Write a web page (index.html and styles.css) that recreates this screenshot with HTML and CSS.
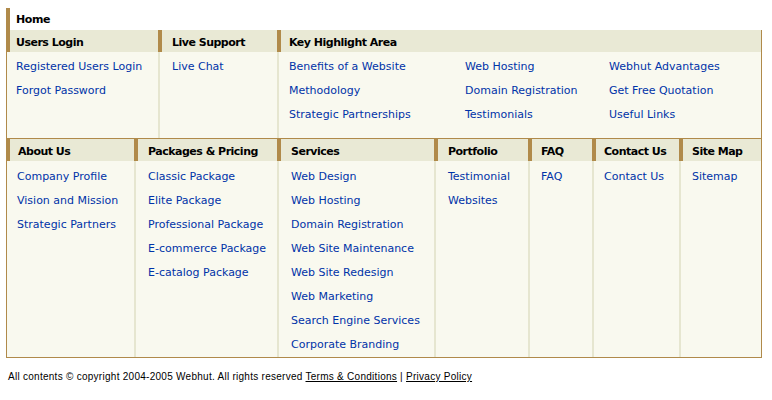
FILE: index.html
```html
<!DOCTYPE html>
<html>
<head>
<meta charset="utf-8">
<link rel="stylesheet" href="styles.css">
</head>
<body>
<div class="page">
  <div class="home">Home</div>
  <div class="box">
    <div class="row row-top">
      <div class="col w-users">
        <div class="head first pad-6">Users Login</div>
        <div class="body first pad-6">
          <a href="#">Registered Users Login</a>
          <a href="#">Forgot Password</a>
        </div>
      </div>
      <div class="col w-live">
        <div class="head">Live Support</div>
        <div class="body"><a href="#">Live Chat</a></div>
      </div>
      <div class="col w-key">
        <div class="head pad-8">Key Highlight Area</div>
        <div class="body pad-8 key-grid">
          <a href="#">Benefits of a Website</a>
          <a href="#">Web Hosting</a>
          <a href="#">Webhut Advantages</a>
          <a href="#">Methodology</a>
          <a href="#">Domain Registration</a>
          <a href="#">Get Free Quotation</a>
          <a href="#">Strategic Partnerships</a>
          <a href="#">Testimonials</a>
          <a href="#">Useful Links</a>
        </div>
      </div>
    </div>
    <div class="row row-bottom">
      <div class="col w-about">
        <div class="head first pad-7">About Us</div>
        <div class="body first pad-7">
          <a href="#">Company Profile</a>
          <a href="#">Vision and Mission</a>
          <a href="#">Strategic Partners</a>
        </div>
      </div>
      <div class="col w-pack">
        <div class="head">Packages &amp; Pricing</div>
        <div class="body">
          <a href="#">Classic Package</a>
          <a href="#">Elite Package</a>
          <a href="#">Professional Package</a>
          <a href="#">E-commerce Package</a>
          <a href="#">E-catalog Package</a>
        </div>
      </div>
      <div class="col w-serv">
        <div class="head">Services</div>
        <div class="body">
          <a href="#">Web Design</a>
          <a href="#">Web Hosting</a>
          <a href="#">Domain Registration</a>
          <a href="#">Web Site Maintenance</a>
          <a href="#">Web Site Redesign</a>
          <a href="#">Web Marketing</a>
          <a href="#">Search Engine Services</a>
          <a href="#">Corporate Branding</a>
        </div>
      </div>
      <div class="col w-port">
        <div class="head">Portfolio</div>
        <div class="body">
          <a href="#">Testimonial</a>
          <a href="#">Websites</a>
        </div>
      </div>
      <div class="col w-faq">
        <div class="head pad-9">FAQ</div>
        <div class="body pad-9"><a href="#">FAQ</a></div>
      </div>
      <div class="col w-contact">
        <div class="head pad-8">Contact Us</div>
        <div class="body pad-8"><a href="#">Contact Us</a></div>
      </div>
      <div class="col w-site">
        <div class="head pad-9">Site Map</div>
        <div class="body pad-9"><a href="#">Sitemap</a></div>
      </div>
    </div>
  </div>
  <div class="footer">All contents &copy; copyright 2004-2005 Webhut. All rights reserved <a href="#">Terms &amp; Conditions</a> | <a href="#">Privacy Policy</a></div>
</div>
</body>
</html>
```
FILE: styles.css
```css
html, body {
  margin: 0;
  padding: 0;
  background: #ffffff;
}

.page {
  padding: 8px 0 0 6px;
  width: 756px;
  font-family: "DejaVu Sans", Verdana, sans-serif;
  font-size: 11px;
}

.home {
  box-sizing: border-box;
  height: 22px;
  padding-top: 1px;
  line-height: 21px;
  border-left: 4px solid #b08a4a;
  padding-left: 6px;
  font-weight: bold;
  letter-spacing: -0.4px;
  color: #000;
}

.box {
  border-right: 1px solid #b08a4a;
  border-bottom: 1px solid #b08a4a;
}

.row {
  display: flex;
}

.row-top {
  border-bottom: 1px solid #b08a4a;
}

.col {
  display: flex;
  flex-direction: column;
  flex: none;
  box-sizing: border-box;
}

.head {
  box-sizing: border-box;
  height: 22px;
  padding-top: 3px;
  line-height: 19px;
  background: #e9e9d5;
  border-left: 4px solid #b08a4a;
  padding-left: 10px;
  font-weight: bold;
  letter-spacing: -0.5px;
  color: #000;
  white-space: nowrap;
}

.row-bottom .head {
  padding-top: 4px;
  line-height: 18px;
}

.body {
  flex: 1;
  background: #f9f9ef;
  border-left: 2px solid #e6e6d0;
  padding: 3px 0 1px 12px;
}

.row-top .body {
  min-height: 82px;
}

.row-bottom .body {
  padding-top: 4px;
  padding-bottom: 0;
}

.body.first {
  border-left: 1px solid #b08a4a;
}

.body a {
  display: block;
  height: 24px;
  line-height: 24px;
  color: #0033a8;
  text-decoration: none;
  white-space: nowrap;
}

.key-grid {
  display: grid;
  grid-template-columns: 176px 144px auto;
  align-content: start;
}

.head.pad-6 { padding-left: 6px; }
.body.pad-6 { padding-left: 9px; }
.head.pad-7 { padding-left: 8px; }
.body.pad-7 { padding-left: 10px; }
.head.pad-8 { padding-left: 8px; }
.body.pad-8 { padding-left: 10px; }
.head.pad-9 { padding-left: 9px; }
.body.pad-9 { padding-left: 11px; }

.w-users { width: 152px; }
.w-live { width: 119px; }
.w-key { width: 484px; }

.w-about { width: 128px; }
.w-pack { width: 143px; }
.w-serv { width: 157px; }
.w-port { width: 94px; }
.w-faq { width: 64px; }
.w-contact { width: 87px; }
.w-site { width: 82px; }

.footer {
  margin-top: 13px;
  padding-left: 2px;
  font-family: "Liberation Sans", Arial, sans-serif;
  font-size: 10px;
  letter-spacing: 0.27px;
  color: #000;
}

.footer a {
  color: #000;
  text-decoration: underline;
}
```
